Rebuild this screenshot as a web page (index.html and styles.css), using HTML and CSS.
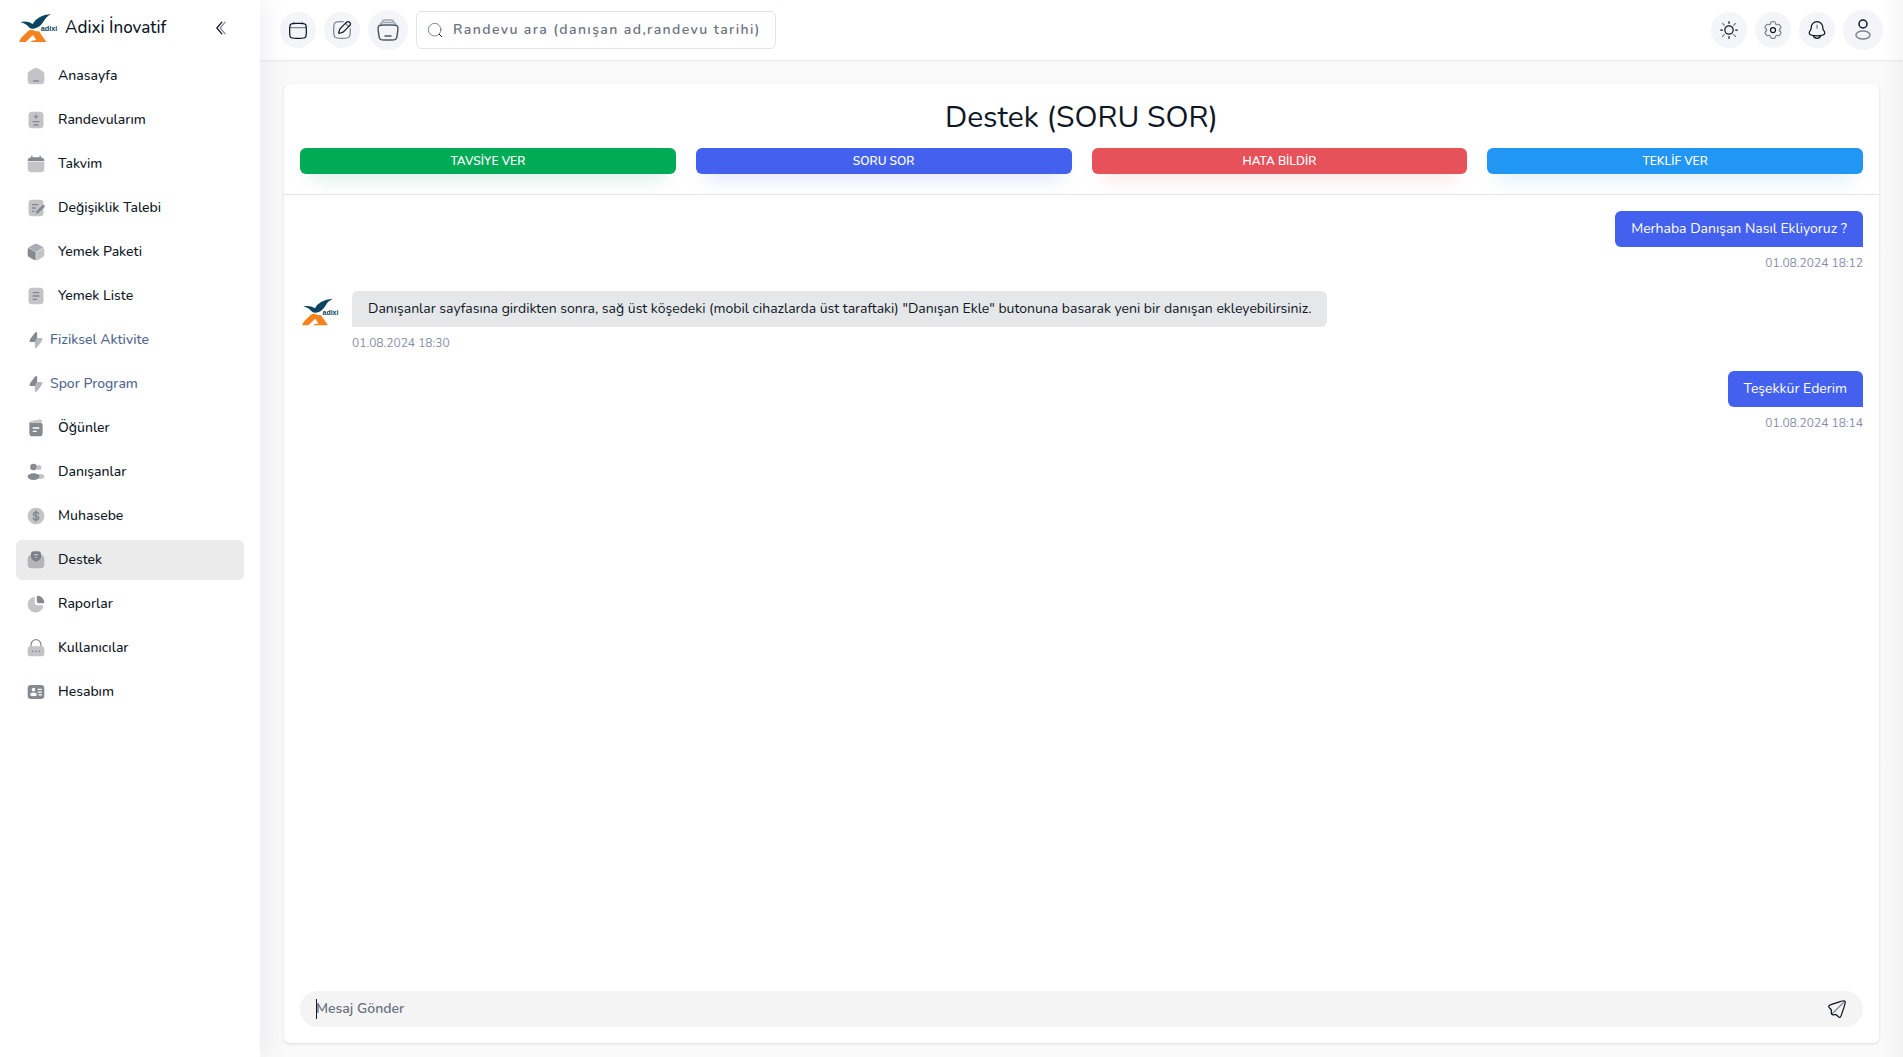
FILE: index.html
```html
<!DOCTYPE html>
<html lang="tr">
<head>
<meta charset="utf-8">
<title>Destek - Adixi İnovatif</title>
<link rel="stylesheet" href="styles.css">
</head>
<body>
<svg class="sprite" aria-hidden="true">
  <symbol id="logo" viewBox="0 0 120 84">
    <path fill="#0b4560" d="M4 24Q26 20 41 30Q54 4 97 0Q82 7 74 22Q64 41 44 44Q36 46 30 40Q22 29 4 24Z"/>
    <path fill="#f5821f" fill-rule="evenodd" d="M0 84Q4 72 14 64L28 51Q36 44 46 50Q54 52 60 52L82 84H34Q40 78 52 78L42 63L20 84Z"/>
    <text x="65" y="51" fill="#0b4560" font-family="Liberation Sans, sans-serif" font-size="22" font-weight="700">adixi</text>
  </symbol>
</svg>

<div class="app">
  <aside class="sidebar">
    <div class="brand">
      <a href="#" class="brand-link"><svg class="logo"><use href="#logo"/></svg><span>Adixi İnovatif</span></a>
      <button type="button" class="collapse" aria-label="Menüyü daralt">
        <svg class="line" width="20" height="20" viewBox="0 0 24 24"><path d="M13 19L7 12L13 5"/><path class="soft" d="M17 19L11 12L17 5"/></svg>
      </button>
    </div>
    <nav>
      <ul class="menu">
        <li><a href="#"><svg viewBox="0 0 24 24"><path class="soft" d="M2 12.2C2 9.9 2 8.8 2.5 7.8C3 6.9 4 6.300 5.900 5.100L7.900 3.900C9.900 2.600 10.900 2 12 2C13.100 2 14.100 2.600 16.100 3.900L18.100 5.100C20 6.300 21 6.900 21.500 7.800C22 8.800 22 9.900 22 12.200V13.700C22 17.600 22 19.600 20.800 20.800C19.700 22 17.800 22 14 22H10C6.200 22 4.300 22 3.200 20.800C2 19.600 2 17.600 2 13.700Z"/><path d="M9 17.200H15A.8.8 0 0 1 15 18.800H9A.8.8 0 0 1 9 17.200Z"/></svg>Anasayfa</a></li>
        <li><a href="#"><svg viewBox="0 0 24 24"><rect class="soft" x="3" y="2" width="18" height="20" rx="4"/><path d="M11.300 5.500H12.700V7.300H14.500V8.700H12.700V10.500H11.300V8.700H9.500V7.300H11.300ZM8 13.200H16V14.800H8ZM9 17.200H15V18.800H9Z"/></svg>Randevularım</a></li>
        <li><a href="#"><svg viewBox="0 0 24 24"><path class="soft" d="M2 9H22V14C22 17.800 22 19.700 20.800 20.800C19.700 22 17.800 22 14 22H10C6.200 22 4.300 22 3.200 20.800C2 19.700 2 17.800 2 14Z"/><path d="M6.200 2.500A.8.8 0 0 1 7.800 2.500V4H16.200V2.500A.8.8 0 0 1 17.800 2.500V4.100C20.700 4.400 22 5.500 22 8.500H2C2 5.500 3.300 4.400 6.200 4.100Z"/></svg>Takvim</a></li>
        <li><a href="#"><svg viewBox="0 0 24 24"><rect class="soft" x="3" y="2" width="18" height="20" rx="4"/><path d="M7 7.200H15V8.800H7ZM7 11.200H12V12.800H7ZM7 15.200H10V16.800H7ZM20 8.500C21.200 7.300 23.500 9.500 22.200 10.900L16 17C15 18 14.200 18.300 11.500 19C12.200 16.200 12.500 15.600 13.500 14.700Z"/></svg>Değişiklik Talebi</a></li>
        <li><a href="#"><svg viewBox="0 0 24 24"><path opacity=".7" d="M12 2C13.500 2 17 4 20.900 6.700L12 12L3.100 6.700C7 4 10.500 2 12 2Z"/><path d="M2.800 7L11.700 12.200V22C9.500 21.800 7 20.200 4.500 18.700C2 17.200 2 16.500 2 12.500C2 10 2 8.800 2.800 7Z"/><path class="soft" d="M21.200 7L12.300 12.200V22C14.500 21.800 17 20.200 19.500 18.700C22 17.200 22 16.500 22 12.500C22 10 22 8.800 21.200 7Z"/></svg>Yemek Paketi</a></li>
        <li><a href="#"><svg viewBox="0 0 24 24"><rect class="soft" x="3" y="2" width="18" height="20" rx="4"/><path d="M8 7.200H16V8.800H8ZM8 11.200H16V12.800H8ZM8 15.200H13V16.800H8Z"/></svg>Yemek Liste</a></li>
        <li><a href="#" class="muted"><svg viewBox="0 0 24 24"><path d="M5.700 9.900L10.500 3.600C12 1.600 13.400 2 13.400 4.400V9.600L10.600 14.400H5.800C3.600 14.400 4 12.200 5.700 9.900Z"/><path opacity=".6" d="M18.300 14.100L13.500 20.400C12 22.400 10.600 22 10.600 19.600V14.400L13.400 9.600H18.200C20.400 9.600 20 11.800 18.300 14.100Z"/></svg>Fiziksel Aktivite</a></li>
        <li><a href="#" class="muted"><svg viewBox="0 0 24 24"><path d="M5.700 9.900L10.500 3.600C12 1.600 13.400 2 13.400 4.400V9.600L10.600 14.400H5.800C3.600 14.400 4 12.200 5.700 9.900Z"/><path opacity=".6" d="M18.300 14.100L13.500 20.400C12 22.400 10.600 22 10.600 19.600V14.400L13.400 9.600H18.200C20.400 9.600 20 11.800 18.300 14.100Z"/></svg>Spor Program</a></li>
        <li><a href="#"><svg viewBox="0 0 24 24"><path class="soft" d="M4 6.500C4 4.500 5 4 7 3.600L15 2C18 1.500 19.500 2 19.500 5.500H7Z"/><path fill-rule="evenodd" d="M4 6C4.500 5.800 5.500 5.800 7 5.800H16C18.800 5.800 20 6.500 20 9.500V18C20 21 18.800 22 16 22H8C5.200 22 4 21 4 18ZM8 11.200V12.800H16V11.200ZM8 15.200V16.800H13V15.200Z"/></svg>Öğünler</a></li>
        <li><a href="#"><svg viewBox="0 0 24 24"><circle class="soft" cx="15.500" cy="6.500" r="3"/><ellipse class="soft" cx="17" cy="17.500" rx="5" ry="3"/><circle cx="9" cy="6" r="4"/><ellipse cx="9" cy="17.500" rx="7" ry="4"/></svg>Danışanlar</a></li>
        <li><a href="#"><svg viewBox="0 0 24 24"><circle class="soft" cx="12" cy="12" r="10"/><path fill="none" stroke="currentColor" stroke-width="1.800" stroke-linecap="round" d="M12 6V18M15 9.500C15 8 13.700 7.500 12 7.500C10.300 7.500 9 8.300 9 9.700C9 11.200 10.300 11.700 12 12C13.700 12.300 15.200 13 15.200 14.400C15.200 15.800 13.800 16.500 12 16.500C10.200 16.500 8.800 15.700 8.800 14.300"/></svg>Muhasebe</a></li>
        <li><a href="#" class="active" aria-current="page"><svg viewBox="0 0 24 24"><path class="soft" d="M2 13C2 8.500 3 6.500 6.500 5.500H17.500C21 6.500 22 8.500 22 13V16C22 20.500 20.500 22 16.500 22H7.500C3.500 22 2 20.500 2 16Z"/><path fill-rule="evenodd" d="M6 5C6 2.500 7 1.500 9.500 1.500H14.500C17 1.500 18 2.500 18 5V8.500C18 10.500 14 14 12 14C10 14 6 10.500 6 8.500ZM9.500 5V6.500H14.500V5ZM10.500 8V9.500H13.500V8Z"/></svg>Destek</a></li>
        <li><a href="#"><svg viewBox="0 0 24 24"><path class="soft" d="M9 3.500C10.200 3.200 10.500 3.700 10.500 4.800V10C10.500 12.500 11 13.500 13.500 13.500H19C20.500 13.500 21 14 20.600 15.500A9.500 9.500 0 1 1 9 3.500Z"/><path d="M13 4C13 2.300 13.500 1.800 15 2.100C18.500 3 21 5.500 21.900 9C22.200 10.500 21.700 11 20 11H15.500C13.700 11 13 10.300 13 8.500Z"/></svg>Raporlar</a></li>
        <li><a href="#"><svg viewBox="0 0 24 24"><path d="M5.300 10V8A6.700 6.700 0 0 1 18.700 8V10H17.200V8A5.200 5.200 0 0 0 6.800 8V10Z"/><rect class="soft" x="2" y="10" width="20" height="12" rx="3"/><circle cx="8" cy="16" r="1"/><circle cx="12" cy="16" r="1"/><circle cx="16" cy="16" r="1"/></svg>Kullanıcılar</a></li>
        <li><a href="#"><svg viewBox="0 0 24 24"><path fill-rule="evenodd" d="M6 3.500H18C21 3.500 22 5 22 8V16C22 19 21 20.500 18 20.500H6C3 20.500 2 19 2 16V8C2 5 3 3.500 6 3.500ZM9 7A2.200 2.200 0 1 0 9 11.400A2.200 2.200 0 1 0 9 7ZM9 12.500C6.800 12.500 5 13.400 5 15C5 16.500 6 17 9 17C12 17 13 16.500 13 15C13 13.400 11.200 12.500 9 12.500ZM14 8.200V9.700H19V8.200ZM14 11.400V12.900H19V11.400ZM15 14.600V16.100H19V14.600Z"/></svg>Hesabım</a></li>
      </ul>
    </nav>
  </aside>

  <div class="page">
    <header class="topbar">
      <a href="#" class="round" aria-label="Takvim"><svg class="line" width="20" height="20" viewBox="0 0 24 24"><path d="M2 12C2 8.229 2 6.343 3.172 5.172C4.343 4 6.229 4 10 4H14C17.771 4 19.657 4 20.828 5.172C22 6.343 22 8.229 22 12V14C22 17.771 22 19.657 20.828 20.828C19.657 22 17.771 22 14 22H10C6.229 22 4.343 22 3.172 20.828C2 19.657 2 17.771 2 14V12Z"/><path class="soft" d="M7 4V2.500M17 4V2.500M2 9H22"/></svg></a>
      <a href="#" class="round" aria-label="Düzenle"><svg class="line" width="20" height="20" viewBox="0 0 24 24"><path class="soft" d="M22 10.500V12C22 16.714 22 19.071 20.536 20.536C19.071 22 16.714 22 12 22C7.286 22 4.929 22 3.464 20.536C2 19.071 2 16.714 2 12C2 7.286 2 4.929 3.464 3.464C4.929 2 7.286 2 12 2H13.500"/><path d="M17.301 2.806L16.652 3.455L10.687 9.420C10.283 9.824 10.081 10.026 9.907 10.249C9.702 10.511 9.527 10.796 9.383 11.097C9.262 11.352 9.172 11.623 8.991 12.165L8.412 13.900L8.038 15.023C7.949 15.290 8.019 15.584 8.217 15.783C8.416 15.981 8.710 16.051 8.977 15.962L10.100 15.588L11.835 15.009C12.378 14.828 12.649 14.738 12.904 14.617C13.204 14.473 13.489 14.298 13.751 14.093C13.974 13.919 14.176 13.717 14.580 13.313L20.545 7.348L21.194 6.699C22.269 5.624 22.269 3.881 21.194 2.806C20.119 1.731 18.376 1.731 17.301 2.806Z"/><path class="soft" d="M16.652 3.455C16.652 3.455 16.733 4.834 17.950 6.050C19.166 7.267 20.545 7.348 20.545 7.348"/></svg></a>
      <a href="#" class="round large" aria-label="Paketler"><svg class="line dim" width="24" height="24" viewBox="0 0 24 24"><path class="soft" d="M19.562 7C19.790 5.695 18.786 4.500 17.462 4.500H6.538C5.213 4.500 4.209 5.695 4.438 7M17.500 4.500C17.528 4.241 17.543 4.111 17.543 4.004C17.545 2.981 16.774 2.121 15.756 2.011C15.650 2 15.519 2 15.259 2H8.741C8.480 2 8.350 2 8.244 2.011C7.226 2.121 6.455 2.981 6.457 4.004C6.457 4.111 6.471 4.241 6.500 4.500"/><path d="M21.194 16.793C20.844 19.274 20.669 20.514 19.772 21.257C18.875 22 17.551 22 14.905 22H9.095C6.449 22 5.126 22 4.228 21.257C3.331 20.514 3.156 19.274 2.806 16.793L2.384 13.793C1.937 10.629 1.714 9.048 2.662 8.024C3.610 7 5.298 7 8.672 7H15.328C18.702 7 20.390 7 21.338 8.024C22.286 9.048 22.063 10.629 21.616 13.793Z"/><path d="M9 18H15"/></svg></a>
      <form class="search" role="search">
        <svg class="line" width="16" height="16" viewBox="0 0 24 24"><circle class="soft" cx="11.500" cy="11.500" r="9.500"/><path d="M18.500 18.500L22 22"/></svg>
        <input type="text" aria-label="Randevu ara" placeholder="Randevu ara (danışan ad,randevu tarihi)">
      </form>
      <div class="tools">
        <button type="button" class="round" aria-label="Tema"><svg class="line" width="20" height="20" viewBox="0 0 24 24"><circle cx="12" cy="12" r="5"/><path d="M12 2V4M12 20V22M4 12H2M22 12H20"/><path class="soft" d="M19.778 4.223L17.556 6.254M4.222 4.223L6.444 6.254M6.444 17.556L4.222 19.778M19.778 19.777L17.556 17.555"/></svg></button>
        <button type="button" class="round" aria-label="Ayarlar"><svg class="line" width="20" height="20" viewBox="0 0 24 24"><circle cx="12" cy="12" r="3"/><path class="soft" d="M13.765 2.152C13.398 2 12.932 2 12 2C11.068 2 10.602 2 10.235 2.152C9.745 2.355 9.355 2.745 9.152 3.235C9.060 3.458 9.023 3.719 9.009 4.098C8.988 4.656 8.702 5.172 8.219 5.451C7.736 5.730 7.146 5.720 6.652 5.459C6.316 5.281 6.073 5.183 5.833 5.151C5.307 5.082 4.775 5.224 4.354 5.547C4.039 5.789 3.806 6.193 3.340 7C2.874 7.807 2.641 8.210 2.589 8.605C2.520 9.131 2.662 9.663 2.985 10.084C3.133 10.276 3.340 10.437 3.661 10.639C4.134 10.936 4.438 11.442 4.438 12C4.438 12.558 4.134 13.064 3.661 13.361C3.340 13.563 3.132 13.724 2.985 13.917C2.662 14.337 2.520 14.869 2.589 15.395C2.641 15.789 2.874 16.193 3.340 17C3.806 17.807 4.039 18.211 4.354 18.453C4.775 18.776 5.307 18.918 5.833 18.849C6.073 18.817 6.316 18.719 6.652 18.541C7.145 18.280 7.736 18.270 8.219 18.549C8.702 18.828 8.988 19.344 9.009 19.902C9.023 20.282 9.060 20.542 9.152 20.765C9.355 21.255 9.745 21.645 10.235 21.848C10.602 22 11.068 22 12 22C12.932 22 13.398 22 13.765 21.848C14.255 21.645 14.645 21.255 14.848 20.765C14.940 20.542 14.977 20.282 14.991 19.902C15.012 19.344 15.298 18.828 15.781 18.549C16.264 18.270 16.854 18.280 17.348 18.541C17.684 18.719 17.927 18.817 18.167 18.849C18.693 18.918 19.225 18.776 19.646 18.453C19.961 18.211 20.194 17.807 20.660 17C21.126 16.193 21.359 15.789 21.411 15.395C21.480 14.869 21.338 14.337 21.015 13.916C20.867 13.724 20.660 13.563 20.339 13.361C19.866 13.064 19.562 12.558 19.562 12C19.562 11.442 19.866 10.936 20.339 10.639C20.660 10.437 20.868 10.276 21.015 10.084C21.338 9.663 21.480 9.131 21.411 8.605C21.359 8.211 21.126 7.807 20.660 7C20.194 6.193 19.961 5.789 19.646 5.547C19.225 5.224 18.693 5.082 18.167 5.151C17.927 5.183 17.684 5.281 17.348 5.459C16.855 5.720 16.264 5.730 15.781 5.451C15.298 5.172 15.012 4.656 14.991 4.098C14.977 3.718 14.940 3.458 14.848 3.235C14.645 2.745 14.255 2.355 13.765 2.152Z"/></svg></button>
        <button type="button" class="round" aria-label="Bildirimler"><svg class="line" width="20" height="20" viewBox="0 0 24 24"><path d="M19 9.704V9C19 5.134 15.866 2 12 2C8.134 2 5 5.134 5 9V9.704C5 10.549 4.750 11.375 4.281 12.078L3.133 13.801C2.083 15.375 2.884 17.514 4.709 18.012C9.483 19.313 14.518 19.313 19.291 18.012C21.116 17.514 21.917 15.375 20.868 13.801L19.719 12.078C19.250 11.375 19 10.549 19 9.704Z"/><path d="M7.500 19C8.155 20.748 9.922 22 12 22C14.078 22 15.845 20.748 16.500 19"/><path class="soft" d="M12 6V10"/></svg></button>
        <button type="button" class="round large" aria-label="Profil"><svg class="line" width="24" height="24" viewBox="0 0 24 24"><circle cx="12" cy="6" r="4"/><ellipse class="soft" cx="12" cy="17" rx="7" ry="4"/></svg></button>
      </div>
    </header>

    <main class="content">
      <section class="card">
        <div class="card-head">
          <h1>Destek (SORU SOR)</h1>
          <div class="kinds">
            <button type="button" class="kind green">TAVSİYE VER</button>
            <button type="button" class="kind blue">SORU SOR</button>
            <button type="button" class="kind red">HATA BİLDİR</button>
            <button type="button" class="kind sky">TEKLİF VER</button>
          </div>
        </div>
        <div class="chat">
          <div class="message mine">
            <p class="bubble">Merhaba Danışan Nasıl Ekliyoruz ?</p>
            <time datetime="2024-08-01T18:12">01.08.2024 18:12</time>
          </div>
          <div class="message theirs">
            <svg class="avatar" role="img" aria-label="Adixi"><use href="#logo"/></svg>
            <p class="bubble">Danışanlar sayfasına girdikten sonra, sağ üst köşedeki (mobil cihazlarda üst taraftaki) "Danışan Ekle" butonuna basarak yeni bir danışan ekleyebilirsiniz.</p>
            <time datetime="2024-08-01T18:30">01.08.2024 18:30</time>
          </div>
          <div class="message mine">
            <p class="bubble">Teşekkür Ederim</p>
            <time datetime="2024-08-01T18:14">01.08.2024 18:14</time>
          </div>
        </div>
        <form class="composer">
          <input type="text" aria-label="Mesaj" placeholder="Mesaj Gönder">
          <button type="button" aria-label="Gönder"><svg class="line" width="20" height="20" viewBox="0 0 24 24"><path d="M17.498 18.485L20.628 9.094C21.876 5.349 22.501 3.476 21.512 2.488C20.524 1.499 18.651 2.124 14.906 3.372L5.575 6.482C3.493 7.176 2.452 7.523 2.136 8.286C2.062 8.466 2.017 8.656 2.003 8.850C1.944 9.674 2.720 10.450 4.272 12.001L4.555 12.284C4.809 12.538 4.937 12.666 5.033 12.808C5.223 13.087 5.330 13.414 5.344 13.752C5.351 13.923 5.324 14.101 5.271 14.457C5.075 15.761 4.977 16.413 5.092 16.915C5.322 17.915 6.096 18.700 7.093 18.943C7.593 19.066 8.246 18.977 9.552 18.800L9.624 18.790C9.992 18.740 10.176 18.715 10.353 18.726C10.674 18.745 10.984 18.850 11.251 19.029C11.398 19.127 11.530 19.259 11.792 19.521L12.044 19.773C13.554 21.283 14.309 22.038 15.110 21.999C15.331 21.988 15.548 21.937 15.750 21.847C16.484 21.524 16.822 20.511 17.498 18.485Z"/><path class="soft" d="M6 18L21 3"/></svg></button>
        </form>
      </section>
    </main>
  </div>
</div>
</body>
</html>
```
FILE: styles.css
```css
*,
*::before,
*::after {
  box-sizing: border-box;
}

body {
  margin: 0;
  background: #fafafa;
  color: #0e1726;
  font-family: Nunito, "Open Sans", sans-serif;
  font-size: 14px;
  line-height: 20px;
}

h1, p, ul {
  margin: 0;
  padding: 0;
  font-weight: 400;
}

a {
  color: inherit;
  text-decoration: none;
}

button, input {
  border: 0;
  padding: 0;
  background: none;
  color: inherit;
  font: inherit;
}

button {
  cursor: pointer;
}

input {
  outline: none;
}

input::placeholder {
  color: #6b7280;
  opacity: 1;
}

svg {
  display: block;
  flex: none;
}

.sprite {
  position: absolute;
  width: 0;
  height: 0;
}

.line {
  fill: none;
  stroke: currentColor;
  stroke-width: 1.5;
  stroke-linecap: round;
  stroke-linejoin: round;
}

.soft {
  opacity: 0.5;
}

.dim {
  opacity: 0.7;
}

.logo {
  width: 40px;
  height: 28px;
}

.avatar {
  align-self: end;
  width: 40px;
  height: 30px;
  padding-left: 2px;
}

.app {
  display: flex;
  min-height: 100vh;
}

/* Sidebar */
.sidebar {
  position: relative;
  z-index: 2;
  flex: 0 0 260px;
  background: #fff;
  box-shadow: 5px 0 25px 0 rgba(94, 92, 154, 0.1);
}

.brand {
  display: flex;
  align-items: center;
  justify-content: space-between;
  height: 56px;
  padding: 0 23px 0 19px;
}

.brand-link {
  display: flex;
  align-items: center;
  gap: 6px;
  font-size: 17px;
  font-weight: 500;
}

.collapse {
  display: grid;
  place-items: center;
  width: 32px;
  height: 32px;
}

.menu {
  display: flex;
  flex-direction: column;
  gap: 4px;
  padding: 0 16px;
  font-weight: 500;
  list-style: none;
}

.menu a {
  display: flex;
  align-items: center;
  gap: 12px;
  height: 40px;
  padding: 0 10px;
  border-radius: 6px;
}

.menu svg {
  width: 20px;
  height: 20px;
  fill: currentColor;
  color: #0e1726;
  opacity: 0.5;
}

.menu a.active {
  background: #ebebeb;
}

.menu a.muted {
  gap: 4px;
  color: #506690;
}

/* Top bar */
.page {
  position: relative;
  display: flex;
  flex: 1;
  flex-direction: column;
  min-width: 0;
}

.page::after {
  content: "";
  position: absolute;
  inset: 0 0 0 auto;
  width: 20px;
  background: linear-gradient(to right, rgba(94, 92, 154, 0), rgba(94, 92, 154, 0.05));
  pointer-events: none;
}

.topbar {
  display: flex;
  align-items: center;
  gap: 8px;
  height: 60px;
  padding: 0 20px;
  background: #fff;
  box-shadow: 0 1px 2px rgba(0, 0, 0, 0.07);
}

.round {
  display: grid;
  place-items: center;
  width: 36px;
  height: 36px;
  border-radius: 50%;
  background: #f3f5f9;
}

.round.large {
  width: 40px;
  height: 40px;
}

.search {
  display: flex;
  align-items: center;
  gap: 10px;
  width: 360px;
  height: 38px;
  padding: 0 4px 0 10px;
  border: 1px solid #e0e6ed;
  border-radius: 6px;
}

.search input {
  flex: 1;
  min-width: 0;
  font-weight: 600;
  letter-spacing: 0.1em;
}

.tools {
  display: flex;
  align-items: center;
  gap: 8px;
  margin-left: auto;
}

/* Support card */
.content {
  display: flex;
  flex: 1;
  padding: 24px 24px 14px;
}

.card {
  display: flex;
  flex: 1;
  flex-direction: column;
  border-radius: 6px;
  background: #fff;
  box-shadow: 0 1px 3px rgba(0, 0, 0, 0.12);
}

.card-head {
  display: grid;
  gap: 12px;
  padding: 16px 16px 20px;
  border-bottom: 1px solid #e0e6ed;
}

h1 {
  font-size: 30px;
  line-height: 36px;
  text-align: center;
}

.kinds {
  display: grid;
  grid-template-columns: repeat(4, 1fr);
  gap: 20px;
}

.kind {
  height: 26px;
  border-radius: 6px;
  color: #fff;
  font-size: 12px;
  font-weight: 600;
}

.green {
  background: #00ab55;
  box-shadow: 0 10px 20px -10px rgba(0, 171, 85, 0.44);
}

.blue {
  background: #4361ee;
  box-shadow: 0 10px 20px -10px rgba(67, 97, 238, 0.44);
}

.red {
  background: #e7515a;
  box-shadow: 0 10px 20px -10px rgba(231, 81, 90, 0.44);
}

.sky {
  background: #2196f3;
  box-shadow: 0 10px 20px -10px rgba(33, 150, 243, 0.44);
}

.chat {
  display: flex;
  flex: 1;
  flex-direction: column;
  gap: 20px;
  padding: 16px;
}

.message {
  display: grid;
  row-gap: 8px;
}

.mine {
  justify-items: end;
}

.theirs {
  grid-template-columns: 40px auto;
  column-gap: 12px;
  justify-content: start;
  justify-items: start;
}

.theirs time {
  grid-column: 2;
}

.bubble {
  padding: 8px 16px;
  border-radius: 6px;
}

.mine .bubble {
  border-bottom-right-radius: 0;
  background: #4361ee;
  color: #fff;
}

.theirs .bubble {
  border-bottom-left-radius: 0;
  background: #e5e7e9;
}

time {
  color: #888ea8;
  font-size: 12px;
  line-height: 16px;
}

.composer {
  display: flex;
  align-items: center;
  height: 36px;
  margin: 0 16px 16px;
  padding: 0 16px;
  border-radius: 18px;
  background: #f4f4f4;
}

.composer input {
  flex: 1;
  min-width: 0;
  background: linear-gradient(#0e1726, #0e1726) left center / 1px 20px no-repeat;
  font-weight: 600;
}
```
